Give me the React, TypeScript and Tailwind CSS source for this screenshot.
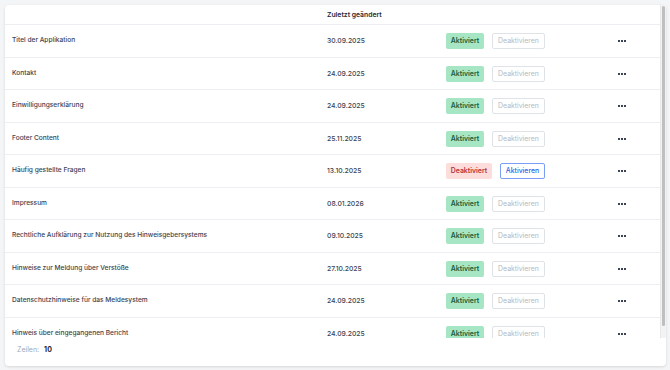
import React from 'react';

type Row = {
  title: string;
  date: string;
  active: boolean;
};

const rows: Row[] = [
  { title: 'Titel der Applikation', date: '30.09.2025', active: true },
  { title: 'Kontakt', date: '24.09.2025', active: true },
  { title: 'Einwilligungserklärung', date: '24.09.2025', active: true },
  { title: 'Footer Content', date: '25.11.2025', active: true },
  { title: 'Häufig gestellte Fragen', date: '13.10.2025', active: false },
  { title: 'Impressum', date: '08.01.2026', active: true },
  { title: 'Rechtliche Aufklärung zur Nutzung des Hinweisgebersystems', date: '09.10.2025', active: true },
  { title: 'Hinweise zur Meldung über Verstöße', date: '27.10.2025', active: true },
  { title: 'Datenschutzhinweise für das Meldesystem', date: '24.09.2025', active: true },
  { title: 'Hinweis über eingegangenen Bericht', date: '24.09.2025', active: true },
];

function Dots() {
  return (
    <svg width="8" height="2" viewBox="0 0 8 2" className="text-[#3a4456]">
      <rect x="0" y="0" width="2" height="2" fill="currentColor" />
      <rect x="3" y="0" width="2" height="2" fill="currentColor" />
      <rect x="6" y="0" width="2" height="2" fill="currentColor" />
    </svg>
  );
}

export default function App() {
  return (
    <div
      className="h-[370px] w-[670px] bg-[#f4f5f7] pl-[5px] pr-[4px] pt-[5px] pb-[4px]"
      style={{ fontFamily: 'Inter, "Noto Sans", sans-serif' }}
    >
      <div className="flex h-full flex-col overflow-hidden rounded-[4px] bg-white shadow-[0_1px_3px_rgba(0,0,0,0.12)]">
        {/* Table + scrollbar */}
        <div className="flex h-[333px]">
          <div className="flex-1 overflow-hidden">
            <div className="flex h-[20px] items-center border-b border-[#eceef1] pl-[7px] pt-[1px]">
              <div className="w-[315px]"></div>
              <div className="text-[6.8px] font-semibold text-[#1f2733]">Zuletzt geändert</div>
            </div>

            {rows.map((row) => (
              <div
                key={row.title}
                className="flex h-[32.5px] items-center border-b border-[#eceef1] pl-[7px] pt-[1px]"
              >
                <div className="w-[315px] text-[6.6px] font-medium text-[#3b4351]">{row.title}</div>
                <div className="w-[119px] text-[6.8px] font-medium text-[#3b4351]">{row.date}</div>
                <div className="flex w-[172px] items-center gap-[8px]">
                  {row.active ? (
                    <>
                      <span className="flex h-[16px] w-[38px] items-center justify-center rounded-[2px] bg-[#a6e6c4] text-[6.9px] font-semibold text-[#1a5c3a]">
                        Aktiviert
                      </span>
                      <span className="flex h-[16px] w-[53px] items-center justify-center rounded-[2px] border border-[#dfe2e6] text-[6.9px] text-[#b4b9c1]">
                        Deaktivieren
                      </span>
                    </>
                  ) : (
                    <>
                      <span className="flex h-[16px] w-[46px] items-center justify-center rounded-[2px] bg-[#fddcdc] text-[6.9px] font-semibold text-[#b3343b]">
                        Deaktiviert
                      </span>
                      <span className="flex h-[16px] w-[45px] items-center justify-center rounded-[2px] border border-[#7a9ef5] text-[6.9px] font-medium text-[#2d62e8]">
                        Aktivieren
                      </span>
                    </>
                  )}
                </div>
                <Dots />
              </div>
            ))}
          </div>

          {/* Scrollbar */}
          <div className="w-[6px] border-l border-[#e8e8e8] bg-[#f3f3f3] pt-[1px]">
            <div className="mx-[1px] h-[320px] rounded-[2px] bg-[#bfbfbf]"></div>
          </div>
        </div>

        {/* Footer */}
        <div className="flex items-center gap-[5px] pl-[12px] pt-[7px] text-[7px]">
          <span className="text-[#a3a9b3]">Zeilen:</span>
          <span className="font-bold text-[#1f2733]">10</span>
        </div>
      </div>
    </div>
  );
}
